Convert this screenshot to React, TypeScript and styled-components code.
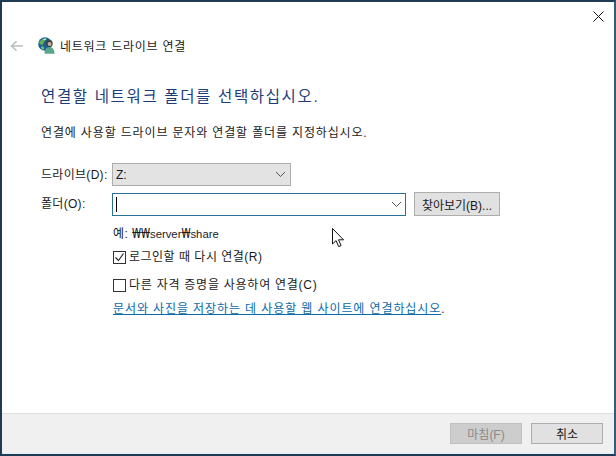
import React from "react";
import styled, { createGlobalStyle } from "styled-components";

const Global = createGlobalStyle`
  html, body { margin: 0; padding: 0; background: #fff; }
  * { box-sizing: border-box; }
`;

const LATIN = `"Liberation Sans", "Noto Sans CJK KR", sans-serif`;

const Window = styled.div`
  position: relative;
  width: 616px;
  height: 456px;
  display: flex;
  flex-direction: column;
  background: #fff;
  border: 2px solid #1f3a52;
  border-right-color: #2f5f7f;
  font-family: ${LATIN};
  font-size: 12px;
  color: #1a1a1a;
  overflow: hidden;
`;
const CloseBar = styled.div`
  height: 30px;
  display: flex;
  justify-content: flex-end;
  padding: 9px 10px 0 0;
`;
const NavBar = styled.div`
  height: 27px;
  display: flex;
  align-items: center;
  padding-left: 8px;
`;
const BackSlot = styled.span`
  width: 28px;
  display: flex;
`;
const Title = styled.span`
  margin-left: 5px;
  font-size: 12px;
  letter-spacing: 0.75px;
`;
const Content = styled.div`
  flex: 1;
  padding: 27px 0 0 39px;
  display: flex;
  flex-direction: column;
`;
const Heading = styled.h1`
  margin: 0;
  font-size: 15.5px;
  line-height: 22px;
  font-weight: 400;
  color: #1c3d78;
  letter-spacing: 1.65px;
`;
const Instruction = styled.p`
  margin: 16px 0 0;
  font-size: 12px;
  line-height: 18px;
  letter-spacing: 0.85px;
`;
const FormRow = styled.div<{ $top: number }>`
  display: flex;
  align-items: center;
  margin-top: ${(p) => p.$top}px;
`;
const Label = styled.label`
  width: 71px;
  font-size: 12px;
  line-height: 18px;
  letter-spacing: 0.3px;
`;
const DriveSelect = styled.div`
  width: 179px;
  height: 23px;
  display: flex;
  align-items: center;
  justify-content: space-between;
  padding: 0 4px 0 3px;
  background: #e3e3e3;
  border: 1px solid #adadad;
`;
const FolderInput = styled.div`
  width: 294px;
  height: 23px;
  display: flex;
  align-items: center;
  justify-content: space-between;
  padding: 0 3px 0 3px;
  background: #fff;
  border: 1px solid #2b6f97;
`;
const Caret = styled.span`
  width: 1px;
  height: 15px;
  background: #000;
`;
const Browse = styled.button`
  margin-left: 8px;
  width: 86px;
  height: 24px;
  padding: 0;
  font: 12px ${LATIN};
  color: #1a1a1a;
  background: #e1e1e1;
  border: 1px solid #adadad;
`;
const Indented = styled.div<{ $top: number; $track?: number }>`
  margin: ${(p) => p.$top}px 0 0 72px;
  display: flex;
  align-items: center;
  line-height: 18px;
  letter-spacing: ${(p) => p.$track ?? 0}px;
`;
const Example = styled.span`
  font-size: 11.3px;
`;
const ExampleKey = styled.span`
  font-size: 12px;
  letter-spacing: 0.4px;
`;
const Won = styled.span`
  font-family: "Noto Sans", sans-serif;
  font-size: 13.5px;
  line-height: 12px;
`;
const Box = styled.span`
  width: 13px;
  height: 13px;
  margin-right: 3px;
  display: flex;
  align-items: center;
  justify-content: center;
  background: #fff;
  border: 1px solid #333;
`;
const WebLink = styled.a`
  color: #0b6aa8;
  letter-spacing: 0.9px;
  text-decoration: underline;
`;
const Dot = styled.span`
  color: #1a1a1a;
`;
const Footer = styled.div`
  height: 41px;
  display: flex;
  justify-content: flex-end;
  gap: 9px;
  padding: 9px 11px 0 0;
  background: #f0f0f0;
  border-top: 1px solid #dfdfdf;
  box-shadow: inset 0 -1px 0 #dcf1f8;
`;
const FooterButton = styled.button<{ $disabled?: boolean }>`
  width: 72px;
  height: 21px;
  padding: 0;
  font: 12px ${LATIN};
  color: ${(p) => (p.$disabled ? "#8a8a8a" : "#1a1a1a")};
  background: ${(p) => (p.$disabled ? "#cdcdcd" : "#e1e1e1")};
  border: 1px solid ${(p) => (p.$disabled ? "#c0c0c0" : "#adadad")};
`;
const Pointer = styled.svg`
  position: absolute;
  left: 330px;
  top: 226px;
`;

const Chevron = () => (
  <svg width="11" height="7" viewBox="0 0 11 7" fill="none" stroke="#555" strokeWidth="1">
    <path d="M1 1l4.5 4.5L10 1" />
  </svg>
);

const NetIcon = () => (
  <svg width="17" height="17" viewBox="0 0 17 17">
    <circle cx="7" cy="7" r="6.8" fill="#1c5f96" />
    <path d="M1 6c1-3 4-5 7-5 1 2-1 2-2 4s-1 3-2 3-2-1-3-2z" fill="#5fb25a" />
    <path d="M5 2.2C6 1.6 7.5 1.5 8.5 2 7.6 3 6 3.2 5 2.2z" fill="#e6f2f7" />
    <path d="M3 10c1-1 3-1 3 1s-1 2-2 1-1-1-1-2z" fill="#6cbf6a" />
    <path d="M6.5 16.8c0-4 1.800-6.800 5-6.800s5 2.800 5 6.800z" fill="#5aa58c" />
    <circle cx="11.300" cy="6.500" r="3.400" fill="#3f443f" />
    <circle cx="11.600" cy="7" r="2" fill="#c3ae9a" />
  </svg>
);

export default function App() {
  return (
    <>
      <Global />
      <Window>
        <CloseBar>
          <svg width="11" height="11" viewBox="0 0 11 11" stroke="#111" strokeWidth="1" fill="none">
            <path d="M.5.5l10 10M10.500.5l-10 10" />
          </svg>
        </CloseBar>
        <NavBar>
          <BackSlot>
            <svg width="14" height="12" viewBox="0 0 14 12" fill="none" stroke="#bdbdbd" strokeWidth="1.6">
              <path d="M13 6H2M6.500 1.200 1.600 6l4.900 4.800" />
            </svg>
          </BackSlot>
          <NetIcon />
          <Title>네트워크 드라이브 연결</Title>
        </NavBar>
        <Content>
          <Heading>연결할 네트워크 폴더를 선택하십시오.</Heading>
          <Instruction>연결에 사용할 드라이브 문자와 연결할 폴더를 지정하십시오.</Instruction>
          <FormRow $top={21}>
            <Label>드라이브(D):</Label>
            <DriveSelect>
              <span>Z:</span>
              <Chevron />
            </DriveSelect>
          </FormRow>
          <FormRow $top={6}>
            <Label>폴더(O):</Label>
            <FolderInput>
              <Caret />
              <Chevron />
            </FolderInput>
            <Browse>찾아보기(B)...</Browse>
          </FormRow>
          <Indented $top={9}>
            <Example>
              <ExampleKey>예: </ExampleKey>
              <Won>₩₩</Won>server<Won>₩</Won>share
            </Example>
          </Indented>
          <Indented $top={5} $track={0.5}>
            <Box>
              <svg width="11" height="11" viewBox="0 0 11 11" fill="none" stroke="#222" strokeWidth="1.1">
                <path d="M1.500 5.500l3 3 5-7" />
              </svg>
            </Box>
            로그인할 때 다시 연결(R)
          </Indented>
          <Indented $top={10} $track={0.75}>
            <Box />
            다른 자격 증명을 사용하여 연결(C)
          </Indented>
          <Indented $top={6}>
            <WebLink>문서와 사진을 저장하는 데 사용할 웹 사이트에 연결하십시오</WebLink>
            <Dot>.</Dot>
          </Indented>
        </Content>
        <Footer>
          <FooterButton $disabled>마침(F)</FooterButton>
          <FooterButton>취소</FooterButton>
        </Footer>
        <Pointer width="13" height="20" viewBox="0 0 13 20" fill="#fff" stroke="#111" strokeWidth="1">
          <path d="M.5.5v15.500l3.600-3.400 2.600 6 2.400-1-2.600-5.800h5z" />
        </Pointer>
      </Window>
    </>
  );
}
